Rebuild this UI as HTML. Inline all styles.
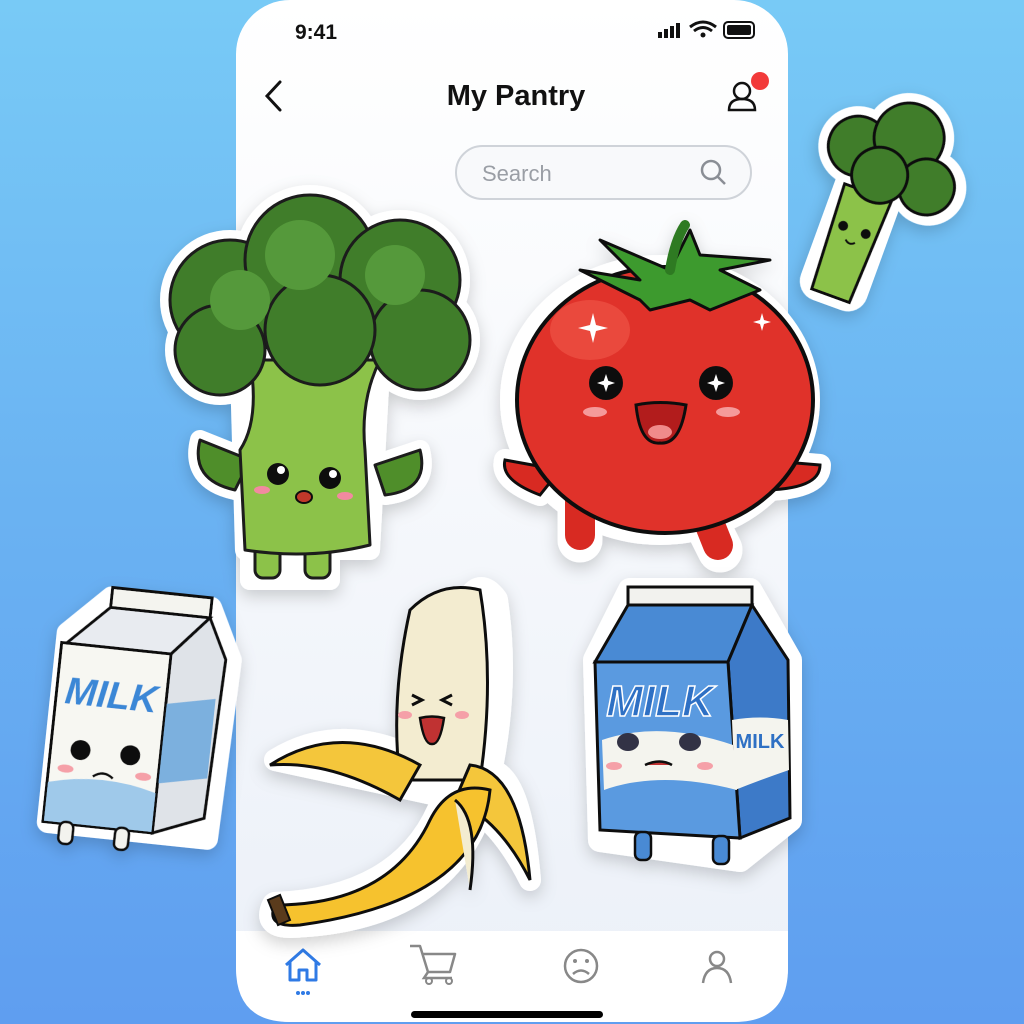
<!DOCTYPE html>
<html><head><style>
html,body{margin:0;padding:0;width:1024px;height:1024px;overflow:hidden;font-family:"Liberation Sans",sans-serif}
body{background:linear-gradient(180deg,#78caf6 0%,#6ab2f2 50%,#5f9ef0 100%)}
</style></head><body>
<svg width="1024" height="1024" viewBox="0 0 1024 1024" style="position:absolute;left:0;top:0">
<defs>
<linearGradient id="ph" x1="0" y1="0" x2="0" y2="1"><stop offset="0" stop-color="#ffffff"/><stop offset="1" stop-color="#ebf0f8"/></linearGradient>
<filter id="sh" x="-20%" y="-20%" width="140%" height="140%"><feDropShadow dx="0" dy="6" stdDeviation="8" flood-color="#000" flood-opacity="0.18"/></filter>
</defs>
<!-- phone -->
<rect x="236" y="0" width="552" height="1022" rx="54" fill="url(#ph)"/>
<path d="M236 931 H788 V968 Q788 1022 734 1022 H290 Q236 1022 236 968 Z" fill="#fff"/>
<text x="316" y="39" font-size="21" font-weight="bold" fill="#111" text-anchor="middle">9:41</text>
<g fill="#111"><rect x="658" y="32" width="4" height="6"/><rect x="664" y="29" width="4" height="9"/><rect x="670" y="26" width="4" height="12"/><rect x="676" y="23" width="4" height="15"/></g>
<path d="M690 27 Q703 17 716 27 M694 31 Q703 24 712 31" stroke="#111" stroke-width="3" fill="none"/><circle cx="703" cy="35" r="2.5" fill="#111"/>
<rect x="724" y="22" width="30" height="16" rx="4" fill="none" stroke="#111" stroke-width="2"/><rect x="727" y="25" width="24" height="10" rx="2" fill="#111"/>
<path d="M280 82 L267 96 L280 110" stroke="#111" stroke-width="3" fill="none" stroke-linecap="round"/>
<text x="516" y="105" font-size="29" font-weight="bold" fill="#111" text-anchor="middle">My Pantry</text>
<circle cx="742" cy="91" r="8" fill="none" stroke="#111" stroke-width="2.5"/><path d="M729 110 Q729 99 742 99 Q755 99 755 110 Z" fill="none" stroke="#111" stroke-width="2.5"/>
<circle cx="760" cy="81" r="9" fill="#f23a3a"/>
<rect x="456" y="146" width="295" height="53" rx="26.5" fill="#f8f9fb" stroke="#cfd3d9" stroke-width="2"/>
<text x="482" y="181" font-size="22" fill="#9a9ea5">Search</text>
<circle cx="711" cy="170" r="9" fill="none" stroke="#8a8e95" stroke-width="2.5"/><path d="M718 177 L725 184" stroke="#8a8e95" stroke-width="2.5"/>
<!-- tab bar icons -->
<path d="M286 965 L303 950 L320 965 M290 962 V980 H299 V970 H307 V980 H316 V962" stroke="#2f7ae5" stroke-width="3" fill="none" stroke-linejoin="round"/>
<g fill="#2f7ae5"><circle cx="298" cy="993" r="2"/><circle cx="303" cy="993" r="2"/><circle cx="308" cy="993" r="2"/></g>
<path d="M410 946 H420 L428 972 H450 L455 954 H423" stroke="#888" stroke-width="2.5" fill="none" stroke-linejoin="round"/><path d="M428 972 L424 978 H452" stroke="#888" stroke-width="2.5" fill="none"/><circle cx="429" cy="981" r="3" fill="none" stroke="#888" stroke-width="2"/><circle cx="449" cy="981" r="3" fill="none" stroke="#888" stroke-width="2"/>
<circle cx="581" cy="966" r="16" fill="none" stroke="#888" stroke-width="2.5"/><circle cx="575" cy="961" r="2" fill="#888"/><circle cx="587" cy="961" r="2" fill="#888"/><path d="M573 974 Q581 967 589 974" stroke="#888" stroke-width="2.5" fill="none"/>
<circle cx="717" cy="959" r="7" fill="none" stroke="#888" stroke-width="2.5"/><path d="M703 983 Q705 968 717 968 Q729 968 731 983" stroke="#888" stroke-width="2.5" fill="none"/>
<rect x="411" y="1011" width="192" height="7" rx="3.5" fill="#000"/>

<!-- big broccoli -->
<g filter="url(#sh)">
<g stroke="#fff" stroke-width="20" stroke-linejoin="round" fill="#fff">
<path d="M240 370 L380 370 L370 550 L245 550 Z"/>
<path d="M200 440 Q190 480 235 490 L250 460 Z M420 450 Q430 490 385 495 L375 465 Z"/>
<circle cx="230" cy="300" r="60"/><circle cx="310" cy="260" r="65"/><circle cx="400" cy="280" r="60"/><circle cx="420" cy="340" r="50"/><circle cx="220" cy="350" r="45"/><circle cx="320" cy="330" r="60"/>
<rect x="250" y="540" width="80" height="40"/>
</g>
<g stroke="#1a1a1a" stroke-width="3" stroke-linejoin="round">
<rect x="255" y="540" width="25" height="38" rx="8" fill="#8cc24a"/><rect x="305" y="540" width="25" height="38" rx="8" fill="#8cc24a"/>
<path d="M200 440 Q190 480 235 490 L250 460 Z M420 450 Q430 490 385 495 L375 465 Z" fill="#4f8e2a"/>
<path d="M250 360 Q260 420 240 450 L245 550 Q310 560 370 545 L365 450 Q360 400 380 360 Z" fill="#8cc24a"/>
<g fill="#3f7d2a"><circle cx="230" cy="300" r="60"/><circle cx="310" cy="260" r="65"/><circle cx="400" cy="280" r="60"/><circle cx="420" cy="340" r="50"/><circle cx="220" cy="350" r="45"/><circle cx="320" cy="330" r="55"/></g>
</g>
<g fill="#55993a"><circle cx="300" cy="255" r="35"/><circle cx="395" cy="275" r="30"/><circle cx="240" cy="300" r="30"/></g>
<circle cx="278" cy="474" r="11" fill="#111"/><circle cx="330" cy="478" r="11" fill="#111"/><circle cx="281" cy="470" r="4" fill="#fff"/><circle cx="333" cy="474" r="4" fill="#fff"/>
<ellipse cx="304" cy="497" rx="8" ry="6" fill="#c0392b" stroke="#111" stroke-width="2"/>
<ellipse cx="262" cy="490" rx="8" ry="4" fill="#f28aa0"/><ellipse cx="345" cy="496" rx="8" ry="4" fill="#f28aa0"/>
</g>

<!-- tomato -->
<g filter="url(#sh)">
<ellipse cx="660" cy="400" rx="160" ry="145" fill="#fff"/>
<path d="M560 470 L505 460 Q500 480 540 495 Z M760 460 L820 465 Q820 490 760 490 Z" fill="#fff" stroke="#fff" stroke-width="22" stroke-linejoin="round"/>
<path d="M580 510 L580 540 M700 510 L720 550" stroke="#fff" stroke-width="45" stroke-linecap="round"/>
<path d="M580 500 L580 535 M700 500 L718 545" stroke="#d82a22" stroke-width="30" stroke-linecap="round"/>
<path d="M560 470 L505 460 Q500 480 540 495 Z M760 460 L820 465 Q820 490 760 490 Z" fill="#d82a22" stroke="#111" stroke-width="3"/>
<ellipse cx="665" cy="400" rx="148" ry="133" fill="#e0302a" stroke="#111" stroke-width="4"/>
<ellipse cx="590" cy="330" rx="40" ry="30" fill="#f05a4a" opacity="0.6"/>
<path d="M670 270 L600 240 L640 280 L580 270 L640 300 L650 310 L690 300 L710 310 L760 290 L720 270 L770 260 L700 255 L690 230 Z" fill="#3d9a2e" stroke="#111" stroke-width="3" stroke-linejoin="round"/>
<path d="M670 270 Q675 240 685 225" stroke="#2e7a22" stroke-width="10" fill="none" stroke-linecap="round"/>
<circle cx="606" cy="383" r="17" fill="#111"/><circle cx="716" cy="383" r="17" fill="#111"/>
<path d="M606 374 L609 383 L606 392 L603 383 Z M597 383 L606 380 L615 383 L606 386Z" fill="#fff"/>
<path d="M716 374 L719 383 L716 392 L713 383 Z M707 383 L716 380 L725 383 L716 386Z" fill="#fff"/>
<path d="M636 405 Q660 400 686 405 Q680 445 660 443 Q640 445 636 405 Z" fill="#b21a1a" stroke="#111" stroke-width="3"/>
<ellipse cx="660" cy="432" rx="12" ry="7" fill="#f08a8a"/>
<path d="M590 325 L593 313 L596 325 L608 328 L596 331 L593 343 L590 331 L578 328Z M760 320 L762 313 L764 320 L771 322 L764 324 L762 331 L760 324 L753 322Z" fill="#fff"/>
<ellipse cx="595" cy="412" rx="12" ry="5" fill="#f59a9a"/><ellipse cx="728" cy="412" rx="12" ry="5" fill="#f59a9a"/>
</g>

<!-- small broccoli -->
<g filter="url(#sh)" transform="rotate(20 860 200)">
<g fill="#fff"><circle cx="840" cy="150" r="40"/><circle cx="885" cy="125" r="45"/><circle cx="920" cy="165" r="38"/><rect x="830" y="160" width="70" height="150" rx="20"/></g>
<path d="M840 190 L890 190 L885 300 L845 300 Z" fill="#8cc24a" stroke="#111" stroke-width="3"/>
<g fill="#3f7d2a" stroke="#111" stroke-width="3"><circle cx="840" cy="150" r="30"/><circle cx="885" cy="125" r="35"/><circle cx="918" cy="165" r="28"/><circle cx="870" cy="170" r="28"/></g>
<circle cx="853" cy="230" r="5" fill="#111"/><circle cx="877" cy="230" r="5" fill="#111"/>
<path d="M860 242 Q865 247 870 242" stroke="#111" stroke-width="2" fill="none"/>
</g>

<!-- left milk -->
<g filter="url(#sh)" transform="rotate(6 130 710)">
<path d="M60 640 L100 600 L200 600 L225 650 L220 830 L60 830 Z" fill="#fff" stroke="#fff" stroke-width="22" stroke-linejoin="round"/>
<path d="M100 590 L200 590 L200 610 L100 610 Z" fill="#f4f4ef" stroke="#111" stroke-width="3"/>
<path d="M60 650 L100 610 L200 610 L165 650 Z" fill="#e8ebf0" stroke="#111" stroke-width="3"/>
<path d="M165 650 L200 610 L220 650 L215 810 L165 830 Z" fill="#dfe3e8" stroke="#111" stroke-width="3"/>
<rect x="55" y="650" width="110" height="180" fill="#f7f7f2" stroke="#111" stroke-width="3"/>
<path d="M56 790 Q110 775 164 790 L164 829 L56 829 Z" fill="#9fc9ea"/>
<path d="M166 700 L214 690 L214 770 L166 780 Z" fill="#7bb0de"/>
<text x="110" y="710" font-size="38" font-weight="bold" fill="#3b87d6" text-anchor="middle" font-style="italic">MILK</text>
<circle cx="85" cy="755" r="10" fill="#111"/><circle cx="135" cy="755" r="10" fill="#111"/>
<path d="M100 780 Q110 772 120 780" stroke="#111" stroke-width="2.5" fill="none"/>
<ellipse cx="72" cy="775" rx="8" ry="4" fill="#f5a0a8"/><ellipse cx="150" cy="775" rx="8" ry="4" fill="#f5a0a8"/>
<rect x="72" y="828" width="14" height="22" rx="6" fill="#f3f3ee" stroke="#111" stroke-width="2.5"/><rect x="128" y="828" width="14" height="22" rx="6" fill="#f3f3ee" stroke="#111" stroke-width="2.5"/>
</g>

<!-- banana -->
<g filter="url(#sh)">
<path d="M275 905 Q400 900 440 810 Q480 720 470 600 Q480 580 495 600 Q510 700 480 810 Q440 920 290 925 Q265 925 275 905 Z" fill="#fff" stroke="#fff" stroke-width="26" stroke-linejoin="round"/>
<path d="M275 760 Q340 720 420 760 L480 770 Q520 760 530 880 Q500 820 460 800 Z" fill="#fff" stroke="#fff" stroke-width="22" stroke-linejoin="round"/>
<path d="M410 610 Q440 580 480 590 Q495 680 480 780 L400 780 Q390 700 410 610 Z" fill="#f3ecd0" stroke="#111" stroke-width="3"/>
<path d="M270 765 Q340 720 420 765 L400 800 Q330 760 270 765 Z" fill="#f4c63a" stroke="#111" stroke-width="3"/>
<path d="M470 765 Q520 770 530 880 Q500 820 455 800 Z" fill="#f4c63a" stroke="#111" stroke-width="3"/>
<path d="M275 905 Q390 905 430 820 Q450 780 490 790 Q480 900 300 925 Q265 928 275 905 Z" fill="#f6c22e" stroke="#111" stroke-width="3"/>
<path d="M268 900 L280 895 L290 920 L278 925 Z" fill="#5a3a1a" stroke="#111" stroke-width="2"/>
<path d="M455 800 Q480 820 470 890" stroke="#111" stroke-width="3" fill="#f3ecd0"/>
<path d="M412 695 L422 700 L412 705 M452 695 L442 700 L452 705" stroke="#111" stroke-width="3" fill="none"/>
<path d="M420 718 Q432 715 444 718 Q440 745 432 744 Q424 745 420 718 Z" fill="#c03030" stroke="#111" stroke-width="2.5"/>
<ellipse cx="405" cy="715" rx="7" ry="4" fill="#f5a0a8"/><ellipse cx="462" cy="715" rx="7" ry="4" fill="#f5a0a8"/>
</g>

<!-- blue milk -->
<g filter="url(#sh)">
<path d="M595 660 L630 590 L750 590 L790 660 L790 820 L740 860 L600 840 Z" fill="#fff" stroke="#fff" stroke-width="24" stroke-linejoin="round"/>
<path d="M628 587 L752 587 L752 605 L628 605 Z" fill="#f2f2ee" stroke="#111" stroke-width="3"/>
<path d="M595 662 L628 605 L752 605 L728 662 Z" fill="#4a8ad4" stroke="#111" stroke-width="3"/>
<path d="M728 662 L752 605 L788 660 L790 818 L740 838 Z" fill="#3d7ac8" stroke="#111" stroke-width="3"/>
<path d="M595 662 L728 662 L740 838 L600 830 Z" fill="#5a9ae0" stroke="#111" stroke-width="3"/>
<path d="M602 740 Q660 720 733 745 L737 790 Q660 770 604 790 Z" fill="#f4f4ee"/>
<path d="M732 720 Q760 715 788 720 L789 770 Q760 780 735 790 Z" fill="#f4f4ee"/>
<text x="660" y="716" font-size="44" font-weight="bold" fill="#2e6fc4" stroke="#fff" stroke-width="1.5" text-anchor="middle" font-style="italic">MILK</text>
<text x="760" y="748" font-size="20" font-weight="bold" fill="#2e6fc4" text-anchor="middle">MILK</text>
<ellipse cx="628" cy="742" rx="11" ry="9" fill="#334"/><ellipse cx="690" cy="742" rx="11" ry="9" fill="#334"/>
<path d="M645 765 Q660 758 672 765" stroke="#111" stroke-width="2.5" fill="#c03030"/>
<ellipse cx="614" cy="766" rx="8" ry="4" fill="#f5a0a8"/><ellipse cx="705" cy="766" rx="8" ry="4" fill="#f5a0a8"/>
<rect x="635" y="832" width="16" height="28" rx="6" fill="#4a8ad4" stroke="#111" stroke-width="2.5"/><rect x="713" y="836" width="16" height="28" rx="6" fill="#4a8ad4" stroke="#111" stroke-width="2.5"/>
</g>
</svg>
</body></html>
